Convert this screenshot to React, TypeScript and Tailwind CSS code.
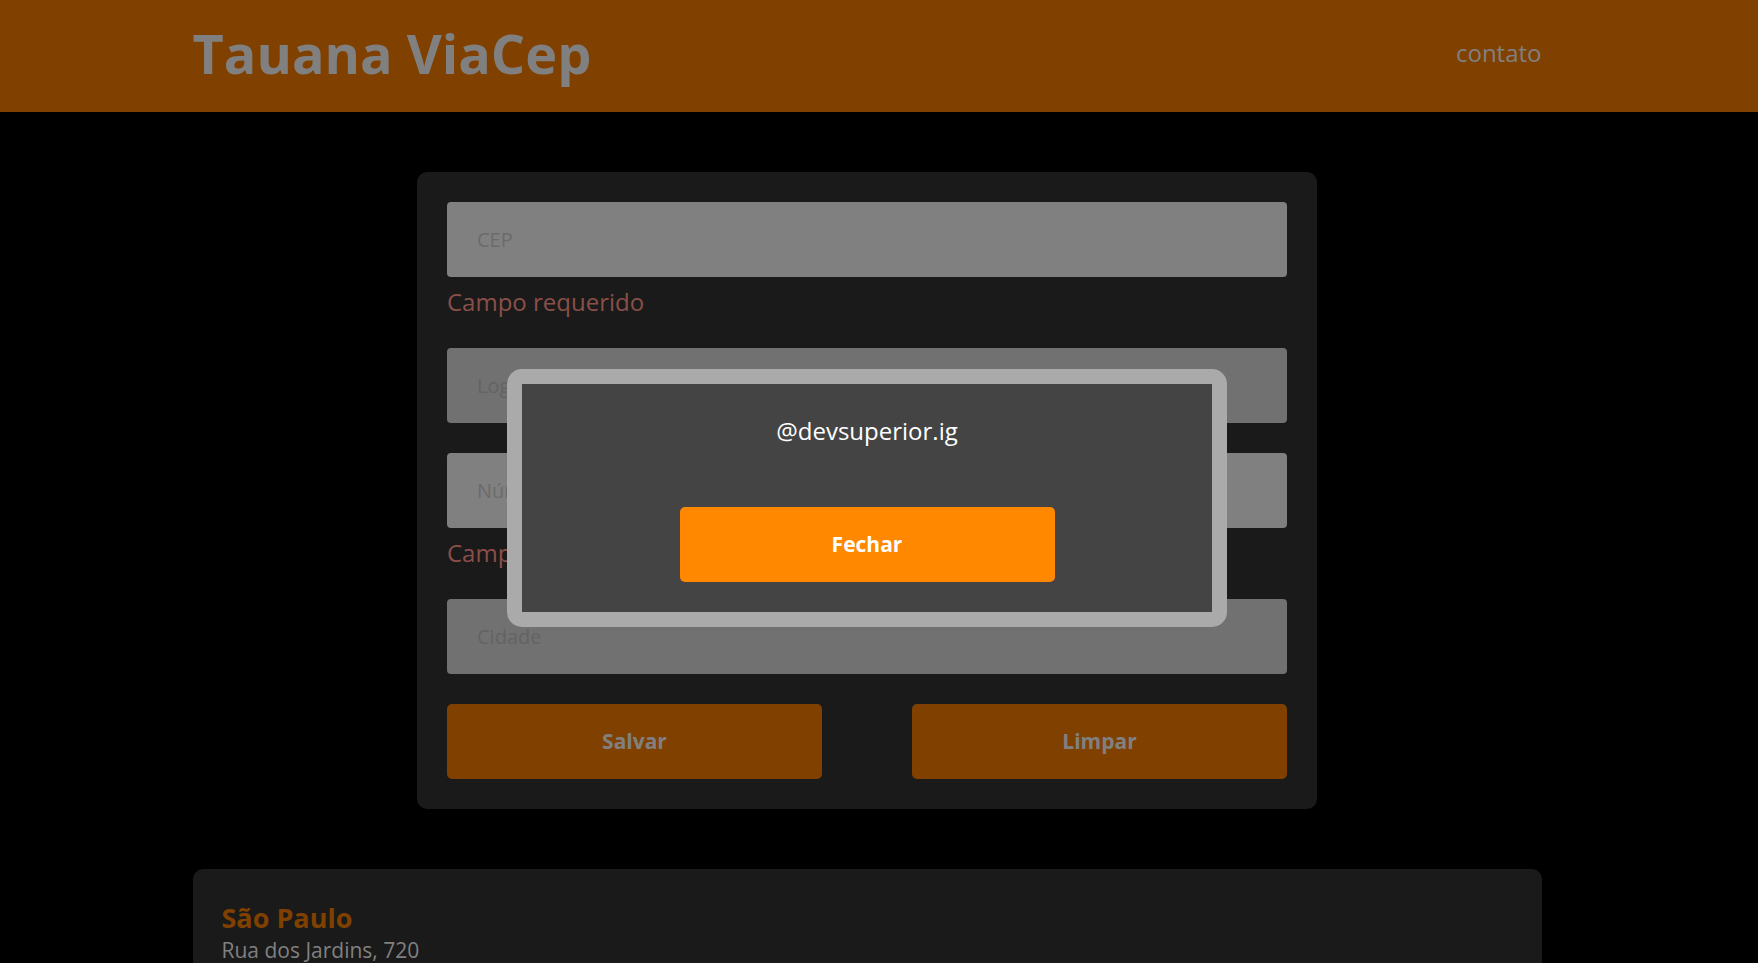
export default function App() {
  return (
    <div className="relative h-[963px] w-[1758px] overflow-hidden bg-black font-['Open_Sans',sans-serif]">
      <header className="h-[112px] w-full bg-[#804000]">
        <div className="h-full w-[1734px]">
          <div className="mx-auto flex h-full w-[1349px] items-center justify-between pb-[6px]">
            <h1 className="text-[54px] font-bold text-[#808080]">Tauana ViaCep</h1>
            <a className="text-[24px] text-[#808080]">contato</a>
          </div>
        </div>
      </header>

      <main className="flex w-[1734px] flex-col items-center pt-[60px]">
        <form className="flex w-[900px] flex-col gap-[30px] rounded-[10px] bg-[#1a1a1a] p-[30px]">
          <div className="flex flex-col">
            <input
              placeholder="CEP"
              className="h-[75px] w-full rounded-[4px] bg-[#808080] px-[30px] text-[20px] outline-none placeholder:text-[#6b6b6b]"
            />
            <p className="mt-[8px] text-[24px] leading-[33px] text-[#8b4f49]">Campo requerido</p>
          </div>
          <input
            placeholder="Logradouro"
            disabled
            className="h-[75px] w-full rounded-[4px] bg-[#717171] px-[30px] text-[20px] outline-none placeholder:text-[#636363]"
          />
          <div className="flex flex-col">
            <input
              placeholder="Número"
              className="h-[75px] w-full rounded-[4px] bg-[#808080] px-[30px] text-[20px] outline-none placeholder:text-[#6b6b6b]"
            />
            <p className="mt-[8px] text-[24px] leading-[33px] text-[#8b4f49]">Campo requerido</p>
          </div>
          <input
            placeholder="Cidade"
            disabled
            className="h-[75px] w-full rounded-[4px] bg-[#717171] px-[30px] text-[20px] outline-none placeholder:text-[#636363]"
          />
          <div className="flex justify-between">
            <button type="button" className="h-[75px] w-[375px] rounded-[5px] bg-[#804000] text-[21px] font-bold text-[#808080]">
              Salvar
            </button>
            <button type="button" className="h-[75px] w-[375px] rounded-[5px] bg-[#804000] text-[21px] font-bold text-[#808080]">
              Limpar
            </button>
          </div>
        </form>

        <section className="mt-[60px] h-[220px] w-[1349px] rounded-[10px] bg-[#1a1a1a] px-[29px] py-[30px]">
          <h3 className="text-[27px] font-bold leading-[37px] text-[#804000]">São Paulo</h3>
          <p className="text-[21px] leading-[28px] text-[#808080]">Rua dos Jardins, 720</p>
        </section>
      </main>

      <div className="absolute left-[507px] top-[369px] flex w-[720px] flex-col items-center rounded-[15px] border-[15px] border-[#aaaaaa] bg-[#444444] p-[30px]">
        <p className="text-[24px] leading-[33px] text-white">@devsuperior.ig</p>
        <button type="button" className="mt-[60px] h-[75px] w-[375px] rounded-[5px] bg-[#ff8800] text-[21px] font-bold text-white">
          Fechar
        </button>
      </div>
    </div>
  );
}
